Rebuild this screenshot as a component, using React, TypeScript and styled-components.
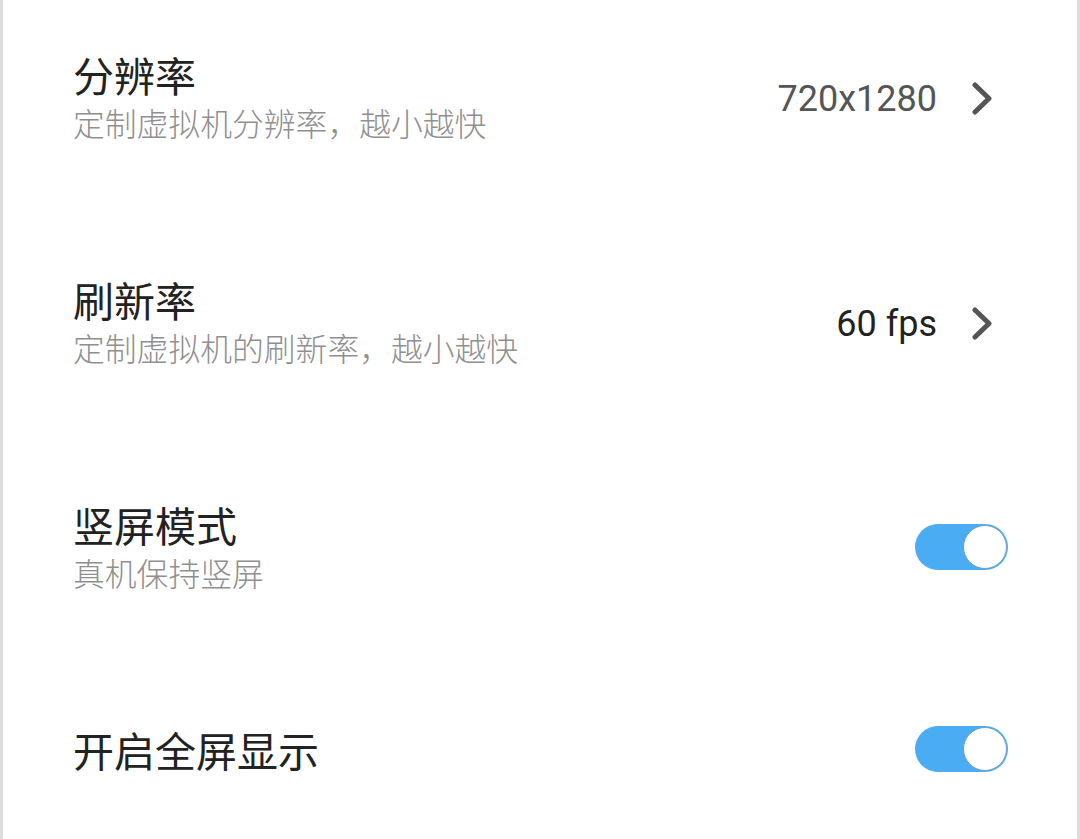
import React from "react";
import styled, { createGlobalStyle } from "styled-components";

const GlobalStyle = createGlobalStyle`
  html, body {
    margin: 0;
    padding: 0;
    background: #ffffff;
  }
  body {
    font-family: Roboto, "Noto Sans CJK SC", sans-serif;
  }
`;

const Screen = styled.div`
  width: 1080px;
  height: 839px;
  box-sizing: border-box;
  border-left: 3px solid #dcdcdc;
  border-right: 3px solid #dcdcdc;
  background: #ffffff;
  overflow: hidden;
`;

const List = styled.div`
  display: flex;
  flex-direction: column;
  gap: 128px;
  padding: 48px 69px 0 70px;
`;

const Row = styled.div`
  display: flex;
  align-items: center;
  justify-content: space-between;
`;

const TextBlock = styled.div`
  display: flex;
  flex-direction: column;
`;

const Title = styled.div`
  font-family: "Noto Sans CJK SC", sans-serif;
  font-size: 41px;
  font-weight: 400;
  line-height: 52px;
  color: #222222;
`;

const Subtitle = styled.div`
  font-family: "Noto Sans CJK SC", sans-serif;
  font-size: 31.8px;
  font-weight: 300;
  line-height: 45px;
  color: #8f8f8f;
`;

const ValueGroup = styled.div`
  display: flex;
  align-items: center;
  gap: 35px;
  margin-right: 16px;
  padding-top: 4px;
`;

const Value = styled.span<{ $muted?: boolean }>`
  font-family: Roboto, sans-serif;
  font-size: 36px;
  color: ${(p) => (p.$muted ? "#555555" : "#222222")};
`;

const Chevron = () => (
  <svg width="20" height="33" viewBox="0 0 20 33">
    <path
      d="M3 3 L17 16.5 L3 30"
      fill="none"
      stroke="#555555"
      strokeWidth="5"
      strokeLinecap="round"
      strokeLinejoin="round"
    />
  </svg>
);

const Track = styled.div<{ $on: boolean }>`
  width: 93px;
  height: 46px;
  border-radius: 23px;
  background: ${(p) => (p.$on ? "#4aadf3" : "#d6d6d6")};
  display: flex;
  align-items: center;
  justify-content: ${(p) => (p.$on ? "flex-end" : "flex-start")};
  box-sizing: border-box;
`;

const Knob = styled.div`
  width: 44px;
  height: 44px;
  border-radius: 50%;
  background: #ffffff;
  border: 1.5px solid #6f9fc6;
  box-sizing: border-box;
  margin: 0 1px;
`;

const Toggle = ({ on }: { on: boolean }) => (
  <Track $on={on}>
    <Knob />
  </Track>
);

export default function App() {
  return (
    <>
      <GlobalStyle />
      <Screen>
        <List>
          <Row>
            <TextBlock>
              <Title>分辨率</Title>
              <Subtitle>定制虚拟机分辨率，越小越快</Subtitle>
            </TextBlock>
            <ValueGroup>
              <Value $muted>720x1280</Value>
              <Chevron />
            </ValueGroup>
          </Row>
          <Row>
            <TextBlock>
              <Title>刷新率</Title>
              <Subtitle>定制虚拟机的刷新率，越小越快</Subtitle>
            </TextBlock>
            <ValueGroup>
              <Value>60 fps</Value>
              <Chevron />
            </ValueGroup>
          </Row>
          <Row>
            <TextBlock>
              <Title>竖屏模式</Title>
              <Subtitle>真机保持竖屏</Subtitle>
            </TextBlock>
            <Toggle on />
          </Row>
          <Row>
            <TextBlock>
              <Title>开启全屏显示</Title>
            </TextBlock>
            <Toggle on />
          </Row>
        </List>
      </Screen>
    </>
  );
}
